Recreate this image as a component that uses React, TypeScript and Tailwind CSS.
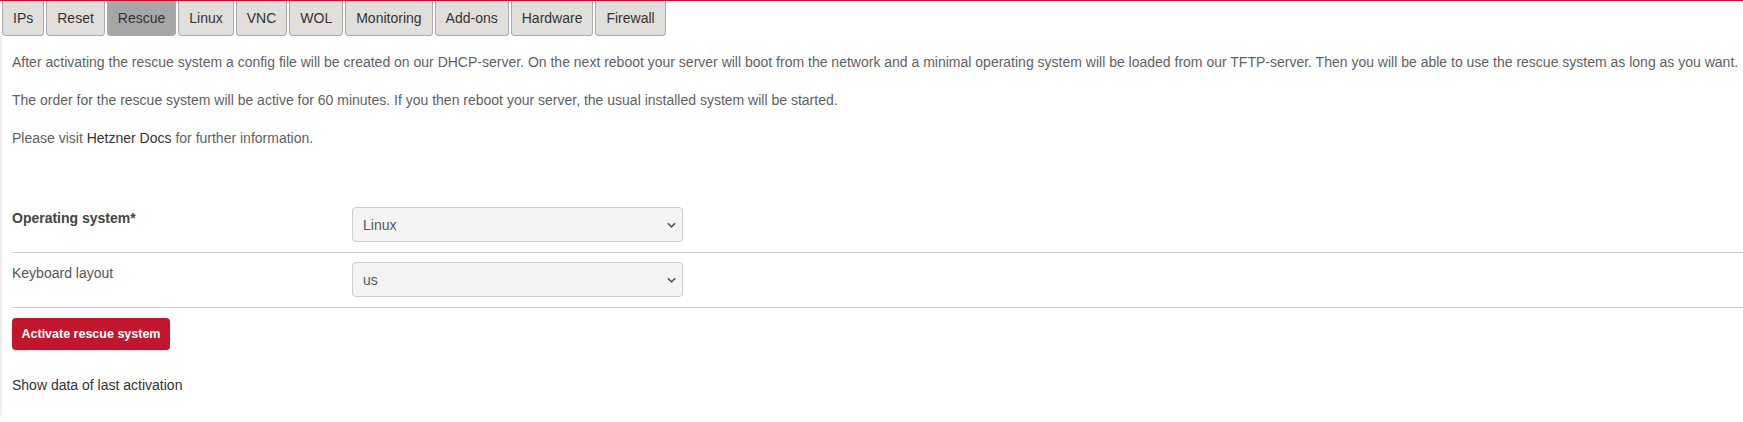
import { useState } from 'react';
import { clsx } from 'clsx';

const TABS = ['IPs', 'Reset', 'Rescue', 'Linux', 'VNC', 'WOL', 'Monitoring', 'Add-ons', 'Hardware', 'Firewall'];

function Chevron() {
    return (
        <svg viewBox="0 0 10 6" className="w-[9px] h-[6px] pointer-events-none absolute right-[7px] top-1/2 -translate-y-1/2">
            <path d="M1 1l4 4 4-4" fill="none" stroke="#555" strokeWidth="1.8" />
        </svg>
    );
}

function Select({ value, options }: { value: string; options: string[] }) {
    const [v, setV] = useState(value);
    return (
        <div className="relative w-[331px] h-[35px]">
            <select
                value={v}
                onChange={(e) => setV(e.target.value)}
                className="appearance-none w-full h-full bg-[#f4f4f4] border border-[#ccc] rounded-[4px] pl-[10px] text-[14px] text-[#555] outline-none"
            >
                {options.map((o) => (
                    <option key={o} value={o}>{o}</option>
                ))}
            </select>
            <Chevron />
        </div>
    );
}

export default function App() {
    const [active, setActive] = useState('Rescue');

    return (
        <div className="min-h-screen bg-white font-['Liberation_Sans',Arial,sans-serif] border-t border-[#c8102e]">
            {/* Tabs */}
            <div className="flex gap-[2px] pl-[2px]">
                {TABS.map((t) => (
                    <button
                        key={t}
                        onClick={() => setActive(t)}
                        className={clsx(
                            'h-[35px] px-[10px] border border-t-0 border-[#aaa] rounded-b-[4px] text-[14px] text-[#333] flex items-center',
                            active === t ? 'bg-[#a6a6a6]' : 'bg-[#e1dfdb]'
                        )}
                    >
                        {t}
                    </button>
                ))}
            </div>

            {/* Panel */}
            <div className="border-l-2 border-[#eee] rounded-bl-[6px] pl-[10px] pt-[16px] pb-[24px] text-[14px] leading-[20px]">
                <div className="flex flex-col gap-[18px] text-[#5f5f5f]">
                    <p>After activating the rescue system a config file will be created on our DHCP-server. On the next reboot your server will boot from the network and a minimal operating system will be loaded from our TFTP-server. Then you will be able to use the rescue system as long as you want.</p>
                    <p>The order for the rescue system will be active for 60 minutes. If you then reboot your server, the usual installed system will be started.</p>
                    <p>Please visit <a className="text-[#333]">Hetzner Docs</a> for further information.</p>
                </div>

                <div className="mt-[50px]">
                    <div className="grid grid-cols-[340px_331px] pt-[9px] pb-[10px] border-b border-[#ccc]">
                        <div className="mt-[1px] font-bold text-[#444]">Operating system*</div>
                        <Select value="Linux" options={['Linux', 'FreeBSD', 'vKVM']} />
                    </div>
                    <div className="grid grid-cols-[340px_331px] pt-[9px] pb-[10px] border-b border-[#ccc]">
                        <div className="mt-[1px] text-[#555]">Keyboard layout</div>
                        <Select value="us" options={['us', 'de', 'fr', 'uk']} />
                    </div>
                </div>

                <button className="mt-[10px] w-[158px] h-[32px] bg-[#c0172f] rounded-[4px] text-white font-bold text-[12.5px] shadow-sm">
                    Activate rescue system
                </button>

                <p className="mt-[25px] text-[#333]">Show data of last activation</p>
            </div>
        </div>
    );
}
